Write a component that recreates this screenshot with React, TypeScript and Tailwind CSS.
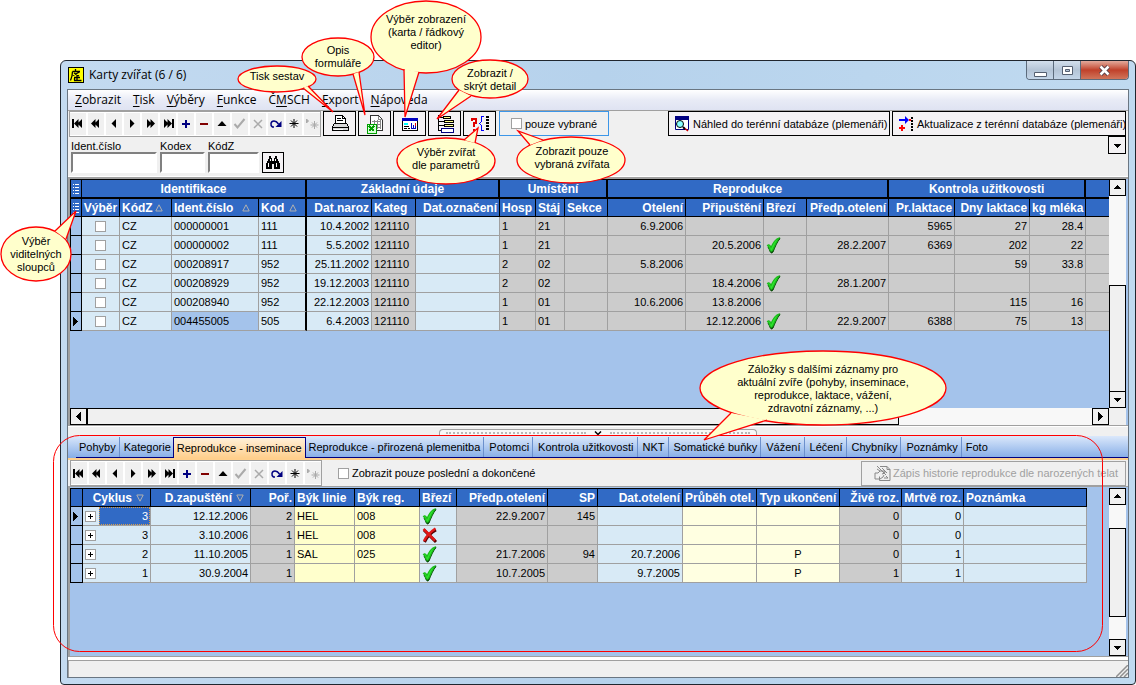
import { useState } from "react";
import type { ReactNode } from "react";

type Align = "left" | "center" | "right";

type Column = {
  title: string;
  width: string;
  align: Align;
  tone: string;
  sort?: "up" | "down";
  thick?: boolean;
};

const ALIGN: Record<Align, string> = {
  left: "text-left",
  center: "text-center",
  right: "text-right",
};

const BLUE = "bg-[#d8eaf6]";
const GRAY = "bg-[#cccccc]";
const YELLOW = "bg-[#ffffcc]";
const CREAM = "bg-[#ffffe1]";

const animalColumns: Column[] = [
  { title: "Výběr", width: "w-[38px]", align: "center", tone: BLUE },
  { title: "KódZ", width: "w-[52px]", align: "left", tone: BLUE, sort: "up" },
  { title: "Ident.číslo", width: "w-[87px]", align: "left", tone: BLUE, sort: "up" },
  { title: "Kod", width: "w-[48px]", align: "left", tone: BLUE, sort: "up", thick: true },
  { title: "Dat.naroz", width: "w-[65px]", align: "right", tone: BLUE },
  { title: "Kateg", width: "w-[44px]", align: "left", tone: GRAY },
  { title: "Dat.označení", width: "w-[84px]", align: "right", tone: BLUE },
  { title: "Hosp", width: "w-[36px]", align: "left", tone: GRAY },
  { title: "Stáj", width: "w-[29px]", align: "left", tone: GRAY },
  { title: "Sekce", width: "w-[43px]", align: "left", tone: GRAY },
  { title: "Otelení", width: "w-[78px]", align: "right", tone: GRAY },
  { title: "Připuštění", width: "w-[78px]", align: "right", tone: GRAY },
  { title: "Březí", width: "w-[43px]", align: "left", tone: GRAY },
  { title: "Předp.otelení", width: "w-[82px]", align: "right", tone: GRAY },
  { title: "Pr.laktace", width: "w-[66px]", align: "right", tone: GRAY },
  { title: "Dny laktace", width: "w-[75px]", align: "right", tone: GRAY },
  { title: "kg mléka", width: "w-[56px]", align: "right", tone: GRAY },
];

const bands = [
  { title: "Identifikace", span: 4 },
  { title: "Základní údaje", span: 3 },
  { title: "Umístění", span: 3 },
  { title: "Reprodukce", span: 4 },
  { title: "Kontrola užitkovosti", span: 3 },
];

const animals = [
  ["", "CZ", "000000001", "111", "10.4.2002", "121110", "", "1", "21", "", "6.9.2006", "", "", "", "5965", "27", "28.4"],
  ["", "CZ", "000000002", "111", "5.5.2002", "121110", "", "1", "21", "", "", "20.5.2006", "yes", "28.2.2007", "6369", "202", "22"],
  ["", "CZ", "000208917", "952", "25.11.2002", "121110", "", "2", "02", "", "5.8.2006", "", "", "", "", "59", "33.8"],
  ["", "CZ", "000208929", "952", "19.12.2003", "121110", "", "2", "02", "", "", "18.4.2006", "yes", "28.1.2007", "", "", ""],
  ["", "CZ", "000208940", "952", "22.12.2003", "121110", "", "1", "01", "", "10.6.2006", "13.8.2006", "", "", "", "115", "16"],
  ["", "CZ", "004455005", "505", "6.4.2003", "121110", "", "1", "01", "", "", "12.12.2006", "yes", "22.9.2007", "6388", "75", "13"],
];

const cycleColumns: Column[] = [
  { title: "Cyklus", width: "w-[68px]", align: "right", tone: BLUE, sort: "down" },
  { title: "D.zapuštění", width: "w-[100px]", align: "right", tone: BLUE, sort: "down" },
  { title: "Poř.", width: "w-[44px]", align: "right", tone: GRAY },
  { title: "Býk linie", width: "w-[60px]", align: "left", tone: YELLOW },
  { title: "Býk reg.", width: "w-[65px]", align: "left", tone: YELLOW },
  { title: "Březí", width: "w-[37px]", align: "left", tone: BLUE },
  { title: "Předp.otelení", width: "w-[91px]", align: "right", tone: GRAY },
  { title: "SP", width: "w-[50px]", align: "right", tone: GRAY },
  { title: "Dat.otelení", width: "w-[85px]", align: "right", tone: BLUE },
  { title: "Průběh otel.", width: "w-[74px]", align: "left", tone: CREAM },
  { title: "Typ ukončení", width: "w-[83px]", align: "center", tone: CREAM },
  { title: "Živě roz.", width: "w-[62px]", align: "right", tone: GRAY },
  { title: "Mrtvě roz.", width: "w-[62px]", align: "right", tone: BLUE },
  { title: "Poznámka", width: "w-[123px]", align: "left", tone: BLUE },
];

const cycles = [
  ["3", "12.12.2006", "2", "HEL", "008", "yes", "22.9.2007", "145", "", "", "", "0", "0", ""],
  ["3", "3.10.2006", "1", "HEL", "008", "no", "", "", "", "", "", "0", "0", ""],
  ["2", "11.10.2005", "1", "SAL", "025", "yes", "21.7.2006", "94", "20.7.2006", "", "P", "0", "1", ""],
  ["1", "30.9.2004", "1", "", "", "yes", "10.7.2005", "", "9.7.2005", "", "P", "1", "1", ""],
];

const tabs = [
  "Pohyby",
  "Kategorie",
  "Reprodukce - inseminace",
  "Reprodukce - přirozená plemenitba",
  "Potomci",
  "Kontrola užitkovosti",
  "NKT",
  "Somatické buňky",
  "Vážení",
  "Léčení",
  "Chybníky",
  "Poznámky",
  "Foto",
];

const menu = [
  ["", "Z", "obrazit"],
  ["", "T", "isk"],
  ["", "V", "ýběry"],
  ["", "F", "unkce"],
  ["Č", "M", "SCH"],
  ["", "E", "xport"],
  ["", "N", "ápověda"],
];

const asterisk = "M8 4v9M3.500 8.500h9M5 5.500l6 6M11 5.500l-6 6";

const navItems: { label: string; icon: ReactNode }[] = [
  { label: "První", icon: <path d="M2 4h2v9H2zM4 8.500L8.500 4v3.500L12 4v9L8.500 9.500V13z" fill="#000" /> },
  { label: "O stránku zpět", icon: <path d="M3 8.500L7.500 4v3.500L11 4v9L7.500 9.500V13z" fill="#000" /> },
  { label: "Předchozí", icon: <path d="M5.500 8.500L10 4v9z" fill="#000" /> },
  { label: "Další", icon: <path d="M10.500 8.500L6 4v9z" fill="#000" /> },
  { label: "O stránku vpřed", icon: <path d="M13 8.500L8.500 4v3.500L5 4v9l3.500-3.500V13z" fill="#000" /> },
  { label: "Poslední", icon: <path d="M14 4h-2v9h2zM12 8.500L7.500 4v3.500L4 4v9l3.500-3.500V13z" fill="#000" /> },
  { label: "Přidat", icon: <path d="M4 9h8M8 5v8" stroke="#000080" strokeWidth="2" /> },
  { label: "Smazat", icon: <path d="M4 9h8" stroke="#800000" strokeWidth="2" /> },
  { label: "Upravit", icon: <path d="M3.500 11L8 6l4.500 5z" fill="#000" /> },
  { label: "Uložit", icon: <path d="M2.500 9l3 3.500L12.500 4" stroke="#aaa" strokeWidth="2" fill="none" /> },
  { label: "Zrušit", icon: <path d="M4 5l8 8M12 5l-8 8" stroke="#aaa" strokeWidth="1.5" /> },
  {
    label: "Obnovit",
    icon: (
      <>
        <path d="M6 12H4.500C2 10.500 2.500 6 6 6c2.500 0 3.500 1.500 4.500 3" stroke="#000080" strokeWidth="1.500" fill="none" />
        <path d="M13.500 6v6H7.500z" fill="#000080" />
      </>
    ),
  },
  { label: "Záložka", icon: <path d={asterisk} stroke="#000" /> },
  { label: "Na záložku", icon: <path d="M10.500 6v8M6.500 10h8M8 7.500l5 5M13 7.500l-5 5M2.500 4v4l2-2z" stroke="#aaa" fill="#aaa" /> },
];

const Arrow = ({ dir }: { dir: "up" | "down" | "left" | "right" }) => {
  const d = {
    up: "M0 6L4.500 2 9 6z",
    down: "M0 3h9L4.500 7z",
    left: "M2 4.500L7 0v9z",
    right: "M7 4.500L2 0v9z",
  }[dir];
  return (
    <svg width="9" height="9" viewBox="0 0 9 9" shapeRendering="crispEdges">
      <path d={d} />
    </svg>
  );
};

const Navigator = () => (
  <div className="flex shrink-0 gap-0.5 border border-[#a0a0a0] bg-white py-px">
    {navItems.map((item) => (
      <button key={item.label} type="button" aria-label={item.label} className="flex h-[22px] w-4 items-center justify-center bg-[#f0f0f0]">
        <svg width="16" height="17" viewBox="0 0 16 17">
          {item.icon}
        </svg>
      </button>
    ))}
  </div>
);

const ToolButton = ({ label, children }: { label: string; children: ReactNode }) => (
  <button type="button" aria-label={label} className="flex h-[25px] w-[33px] items-center justify-center border border-black bg-[#f4f2f4]">
    <svg width="20" height="20" viewBox="0 0 20 20" shapeRendering="crispEdges">
      {children}
    </svg>
  </button>
);

const YesMark = () => (
  <svg width="16" height="17" viewBox="0 0 16 17">
    <path d="M2 10C3 8.500 4.500 9 5.500 11 7.500 7 10 2.500 14 1.500 11 5 9 10 7 15c-1 1.500-2 1-2.700 0C3.500 13 3 11.500 2 10z" fill="#064d06" stroke="#064d06" />
    <path d="M1.500 8.500C2.500 7 4 8 5 10.500 7 6 9.500 2 13 1 10.500 5 8.500 9 6.500 13.500c-.7 1-1.700 1-2.200 0C3.500 11.500 3 9.500 1.500 8.500z" fill="#2ee62e" stroke="#1cbc1c" strokeWidth="1.200" />
  </svg>
);

const NoMark = () => (
  <svg width="16" height="17" viewBox="0 0 16 17">
    <path d="M2 3l12 12M14 3C10 5 5 10 2.500 15" stroke="#5a0000" strokeWidth="3" fill="none" />
    <path d="M1.500 2l11.500 11.500M13.500 1.500C9 4.500 4.500 9 2 14" stroke="#e01818" strokeWidth="2.500" fill="none" />
  </svg>
);

const SortMark = ({ dir }: { dir: "up" | "down" }) => (
  <svg width="8" height="8" viewBox="0 0 8 8" className={dir === "up" ? "mr-1.5 shrink-0" : "mr-1 shrink-0"}>
    <path d={dir === "up" ? "M4 .8L.8 7h6.400z" : "M4 7.200L.8 1h6.400z"} fill="none" stroke="#b0b0b0" />
  </svg>
);

const ListMark = () => (
  <svg width="10" height="11" viewBox="0 0 10 11" shapeRendering="crispEdges" className="mx-auto">
    <path d="M2 1.500h1M4 1.500h4M2 4.500h1M4 4.500h4M2 7.500h1M4 7.500h4M2 10.500h1M4 10.500h4" stroke="#fff" />
  </svg>
);

const HeadCell = ({ col }: { col: Column }) => (
  <th
    className={`h-[18px] overflow-hidden border-b border-black bg-[#316ac5] py-0 text-xs font-bold whitespace-nowrap text-white ${col.align === "center" ? "px-0" : "px-0.5"} ${ALIGN[col.align]} ${col.thick ? "border-r-2" : "border-r"}`}
  >
    {col.sort ? (
      <span className={`flex items-center ${col.align === "right" ? "justify-end gap-1" : "justify-between"}`}>
        {col.title}
        <SortMark dir={col.sort} />
      </span>
    ) : (
      col.title
    )}
  </th>
);

const cellContent = (value: string) => {
  if (value === "yes") return <YesMark />;
  if (value === "no") return <NoMark />;
  return value;
};

const ScrollButton = ({ dir }: { dir: "up" | "down" | "left" | "right" }) => (
  <button type="button" aria-label={dir} className="flex h-[17px] w-[17px] shrink-0 items-center justify-center border border-black bg-[#f0f0f0]">
    <Arrow dir={dir} />
  </button>
);

const AnimalGrid = () => {
  const [checked, setChecked] = useState<boolean[]>(animals.map(() => false));

  const toggle = (index: number) => {
    setChecked((prev) => prev.map((v, i) => (i === index ? !v : v)));
  };

  return (
    <table className="w-full table-fixed border-separate border-spacing-0">
      <colgroup>
        <col className="w-[12px]" />
        {animalColumns.map((c) => (
          <col key={c.title} className={c.width} />
        ))}
        <col />
      </colgroup>
      <thead>
        <tr className="bg-[#316ac5] text-xs text-white">
          <th className="h-5 border-x border-t border-b-2 border-black p-0">
            <ListMark />
          </th>
          {bands.map((b) => (
            <th key={b.title} colSpan={b.span} className="h-5 border-t border-r-2 border-b-2 border-black p-0 text-center">
              {b.title}
            </th>
          ))}
          <th className="border-t border-b-2 border-black p-0" />
        </tr>
        <tr className="bg-[#316ac5]">
          <th className="border-x border-b border-black p-0">
            <ListMark />
          </th>
          {animalColumns.map((c) => (
            <HeadCell key={c.title} col={c} />
          ))}
          <th className="border-b border-black p-0" />
        </tr>
      </thead>
      <tbody>
        {animals.map((row, r) => (
          <tr key={row[2]}>
            <td className="h-[19px] border-x border-b border-black bg-[#a4c3eb] p-0">{r === 5 && <Arrow dir="right" />}</td>
            {animalColumns.map((c, i) => (
              <td
                key={c.title}
                className={`h-[19px] border-b border-b-[#a0a0a0] px-0.5 py-0 ${ALIGN[c.align]} ${c.thick ? "border-r-2 border-r-black" : "border-r border-r-[#a0a0a0]"} ${r === 5 && i === 2 ? "bg-[#a4c3eb]" : c.tone}`}
              >
                {i === 0 ? (
                  <input
                    type="checkbox"
                    aria-label={`Výběr ${row[2]}`}
                    checked={checked[r]}
                    onChange={() => toggle(r)}
                    className="mx-auto block h-[11px] w-[11px] appearance-none border border-[#a0a0a0] bg-white checked:bg-[#316ac5]"
                  />
                ) : (
                  cellContent(row[i])
                )}
              </td>
            ))}
            <td className="border-b border-b-[#a0a0a0] bg-[#cccccc] p-0" />
          </tr>
        ))}
      </tbody>
    </table>
  );
};

const CycleGrid = () => (
  <table className="w-[1017px] table-fixed border-separate border-spacing-0">
    <colgroup>
      <col className="w-[13px]" />
      {cycleColumns.map((c) => (
        <col key={c.title} className={c.width} />
      ))}
    </colgroup>
    <thead>
      <tr className="[&>th]:h-[19px] [&>th]:border-t">
        <th className="border-x border-b border-black bg-[#316ac5] p-0" />
        {cycleColumns.map((c) => (
          <HeadCell key={c.title} col={c} />
        ))}
      </tr>
    </thead>
    <tbody>
      {cycles.map((row, r) => (
        <tr key={row[1]}>
          <td className="h-[19px] border-x border-b border-black bg-[#a4c3eb] p-0">{r === 0 && <Arrow dir="right" />}</td>
          {cycleColumns.map((c, i) => (
            <td key={c.title} className={`h-[19px] border-r border-b border-[#a0a0a0] py-0 ${i === 0 ? "pl-0.5" : "px-0.5"} ${ALIGN[c.align]} ${c.tone}`}>
              {i === 0 ? (
                <div className="flex items-center gap-[3px]">
                  <button type="button" aria-label="Rozbalit" className="flex h-[11px] w-[11px] items-center justify-center border border-[#a0a0a0] bg-white">
                    <svg width="5" height="5" viewBox="0 0 5 5" shapeRendering="crispEdges">
                      <path d="M0 2h5v1H0zM2 0h1v5H2z" />
                    </svg>
                  </button>
                  <span
                    className={`h-[18px] flex-1 pr-px leading-4 ${r === 0 ? "border border-dotted border-[#d8a050] bg-[#316ac5] text-white" : "border border-transparent"}`}
                  >
                    {row[0]}
                  </span>
                </div>
              ) : (
                cellContent(row[i])
              )}
            </td>
          ))}
        </tr>
      ))}
    </tbody>
  </table>
);

const bubbles = [
  { cx: 277, cy: 79, rx: 39, ry: 13, tail: "303,88 333,112 308,86" },
  { cx: 338, cy: 57, rx: 36, ry: 19, tail: "353,74 365,115 359,72" },
  { cx: 426, cy: 37, rx: 55, ry: 36, tail: "404,69 405,117 419,72" },
  { cx: 490, cy: 79, rx: 38, ry: 19, tail: "459,90 437,119 471,96" },
  { cx: 446, cy: 161, rx: 49, ry: 23, tail: "464,140 478,128 475,143" },
  { cx: 571, cy: 160, rx: 54, ry: 23, tail: "530,145 518,131 543,140" },
  { cx: 36, cy: 254, rx: 35, ry: 27, tail: "55,231 76,211 66,239" },
  { cx: 823, cy: 388, rx: 123, ry: 37, tail: "731,413 704,440 767,420" },
];

const notes = [
  { place: "left-[237px] top-[70px] w-[80px]", lines: ["Tisk sestav"] },
  { place: "left-[298px] top-[44px] w-[80px]", lines: ["Opis", "formuláře"] },
  { place: "left-[366px] top-[13px] w-[120px]", lines: ["Výběr zobrazení", "(karta / řádkový", "editor)"] },
  { place: "left-[450px] top-[67px] w-[80px]", lines: ["Zobrazit /", "skrýt detail"] },
  { place: "left-[396px] top-[146px] w-[100px]", lines: ["Výběr zvířat", "dle parametrů"] },
  { place: "left-[522px] top-[145px] w-[100px]", lines: ["Zobrazit pouze", "vybraná zvířata"] },
  { place: "left-[1px] top-[235px] w-[70px]", lines: ["Výběr", "viditelných", "sloupců"] },
  {
    place: "left-[723px] top-[363px] w-[200px]",
    lines: ["Záložky s dalšími záznamy pro", "aktuální zvíře (pohyby, inseminace,", "reprodukce, laktace, vážení,", "zdravotní záznamy, ...)"],
  },
];

// Help balloons drawn over the window
const Callouts = () => (
  <div className="pointer-events-none absolute inset-0 overflow-hidden">
    <svg width="1136" height="685" viewBox="0 0 1136 685" className="absolute top-0 left-0">
      <rect x="53.500" y="435.500" width="1049" height="216" rx="26" fill="none" stroke="#f00" />
      {bubbles.map((b) => (
        <g key={b.tail} fill="#ffffcc" stroke="#f00" strokeWidth="1.300">
          <ellipse cx={b.cx} cy={b.cy} rx={b.rx} ry={b.ry} />
          <polyline points={b.tail} />
        </g>
      ))}
    </svg>
    {notes.map((n) => (
      <p key={n.lines[0]} className={`absolute text-center leading-[13px] whitespace-nowrap ${n.place}`}>
        {n.lines.map((line) => (
          <span key={line} className="block">
            {line}
          </span>
        ))}
      </p>
    ))}
  </div>
);

const TitleBar = () => (
  <div className="flex h-7 items-start justify-between">
    <div className="flex h-7 items-center gap-[5px] pl-px font-['Open_Sans',sans-serif] text-xs">
      <svg width="16" height="16" viewBox="0 0 16 16">
        <path d="M0 0h16v16H0z" />
        <path d="M1 1h14v14H1z" fill="#ff0" />
        <path d="M7.500 2v2M4.500 4.500H12M4.500 4.500C4.500 8 4 10 2.500 13.500M5 8.500L11.500 5M6 6l5 3M6 10.500h6M9 8v5M6 13.500h7.500M6.500 11v2.500" stroke="#000" strokeWidth="1.300" fill="none" />
      </svg>
      Karty zvířat (6 / 6)
    </div>
    <div className="flex h-[19px] overflow-hidden rounded-b-[4px] border border-t-0 border-[#5c6b7c]">
      <button type="button" aria-label="Minimalizovat" className="flex w-[27px] items-end justify-center border-r border-[#5c6b7c] bg-linear-to-b from-[#d3dfec] via-[#b4c4d6] to-[#c3d5e8] pb-px">
        <svg width="13" height="11" viewBox="0 0 13 11">
          <path d="M.5 5.500h12v4H.5z" fill="#fff" stroke="#555f70" />
        </svg>
      </button>
      <button type="button" aria-label="Maximalizovat" className="flex w-[27px] items-center justify-center border-r border-[#5c6b7c] bg-linear-to-b from-[#d3dfec] via-[#b4c4d6] to-[#c3d5e8]">
        <svg width="13" height="11" viewBox="0 0 13 11">
          <path d="M1.500 1.500h10v8h-10zM4.500 4.500h4v2h-4z" fill="#fff" stroke="#555f70" fillRule="evenodd" />
        </svg>
      </button>
      <button type="button" aria-label="Zavřít" className="flex w-[47px] items-center justify-center bg-linear-to-b from-[#e2aa9c] via-[#c0402a] to-[#d0745a]">
        <svg width="13" height="11" viewBox="0 0 13 11">
          <path d="M2.500 1.500l8 8M10.500 1.500l-8 8" stroke="#5a4048" strokeWidth="4.500" />
          <path d="M2.500 1.500l8 8M10.500 1.500l-8 8" stroke="#fff" strokeWidth="2.500" />
        </svg>
      </button>
    </div>
  </div>
);

const TopPanel = () => (
  <div className="border-b border-white bg-[#f0f0f0] pb-[3px]">
    <div className="flex h-[25px] items-center gap-0.5 pr-0.5 pl-px">
      <Navigator />
      <ToolButton label="Tisk sestav">
        <path d="M5.500 9.500V1.500h7l3 3v5" fill="#fff" stroke="#000" />
        <path d="M7 4.500h4M7 6.500h6M12.500 1.500v3h3" stroke="#000" fill="none" />
        <path d="M4.500 9.500h12l2 3v4h-16v-4z" fill="#d8d8d8" stroke="#000" />
        <path d="M3 13.500h15" stroke="#000" />
        <path d="M4 15.500h9" stroke="#fff" />
      </ToolButton>
      <ToolButton label="Opis formuláře">
        <path d="M5.500 1.500h8l4 4v11h-12z" fill="#fff" stroke="#333" />
        <path d="M13.500 1.500v4h4M7 7.500h9M7 10.500h9M7 13.500h9M9.500 6v9M12.500 6v9M15.500 6v9" stroke="#888" fill="none" />
        <path d="M2 10h9v9H2z" fill="#d8ffd8" stroke="#00a000" />
        <path d="M4 12l5 5M9 12l-5 5" stroke="#00a000" strokeWidth="2" />
      </ToolButton>
      <ToolButton label="Výběr zobrazení">
        <path d="M2.500 4.500h15v12h-15z" fill="#fff" stroke="#000" />
        <path d="M2 4h16v3H2z" fill="#0000c0" />
        <path d="M4 9h4v2H4z" fill="#0ff" />
        <path d="M4 12h5v1H4zM4 14h3v1H4zM8 14h2v1H8z" />
        <path d="M11.500 9v5.500h4V9M13.500 11v3" stroke="#0000c0" fill="none" />
        <path d="M15 9h1v3h-1z" fill="#e00" />
      </ToolButton>
      <ToolButton label="Skrýt detail">
        <path d="M3.500 1v16M3 3.500h6M3 7.500h6M3 11.500h6M3 16.500h4" stroke="#000" fill="none" />
        <path d="M8.500 2.500h7v2h-7zM9.500 6.500h9v2h-9zM9.500 10.500h9v2h-9z" fill="#ff8" stroke="#000" />
        <path d="M6.500 14.500h12v4h-12z" fill="#fff" stroke="#000080" />
      </ToolButton>
      <ToolButton label="Výběr zvířat dle parametrů">
        <path d="M2 7V5h4v4H4v4M4 14.500v2" stroke="#e00000" strokeWidth="2" fill="none" />
        <path d="M14 2.500h-2.500v5l-2 2 2 2v5H14" stroke="#0000ff" fill="none" />
        <path d="M17 2v15" stroke="#000" strokeWidth="3" strokeDasharray="2 1" />
      </ToolButton>
      <label className="ml-px flex h-[25px] w-[110px] items-center gap-[3px] border border-[#3c96e8] pl-[11px]">
        <input type="checkbox" className="h-[11px] w-[11px] appearance-none border border-[#a0a0a0] bg-white checked:bg-[#316ac5]" />
        pouze vybrané
      </label>
      <div className="ml-auto flex gap-0.5 whitespace-nowrap">
        <button type="button" className="flex h-[25px] w-[222px] items-center gap-[3px] border border-black bg-[#f4f2f4] pl-[5px]">
          <svg width="16" height="16" viewBox="0 0 16 16" className="shrink-0">
            <path d="M1.500 1.500h13v12h-13z" fill="#fff" stroke="#000080" />
            <path d="M1 0h14v4H1z" fill="#000080" />
            <circle cx="6" cy="8" r="3.500" fill="#8ff" stroke="#000" />
            <path d="M9 11l2 2" stroke="#000" strokeWidth="2" />
            <path d="M11 12.500l3 2.500" stroke="#c00" strokeWidth="1.500" />
          </svg>
          Náhled do terénní databáze (plemenáři)
        </button>
        <button type="button" className="flex h-[25px] w-[234px] items-center gap-[3px] border border-black bg-[#f4f2f4] pl-[5px]">
          <svg width="16" height="16" viewBox="0 0 16 16" className="shrink-0">
            <path d="M1 4h7" stroke="#0000ff" strokeWidth="2" />
            <path d="M7 0l4 4-4 4z" fill="#0000ff" />
            <path d="M1 12h6M4 9v6" stroke="#f00" strokeWidth="2" />
            <path d="M11 3h2v2h-2z" fill="#f00" />
            <path d="M14 1v14" stroke="#000" strokeWidth="2" strokeDasharray="2 1" />
          </svg>
          Aktualizace z terénní databáze (plemenáři)
        </button>
      </div>
    </div>
    <div className="flex items-start justify-between pr-0.5 pl-px">
      <div className="flex items-end gap-[3px] pt-1 pl-0.5">
        <label className="flex flex-col leading-3">
          Ident.číslo
          <input className="h-[21px] w-[86px] border-2 border-t-[#808080] border-r-white border-b-white border-l-[#808080] bg-white px-0.5" />
        </label>
        <label className="flex flex-col leading-3">
          Kodex
          <input className="h-[21px] w-[45px] border-2 border-t-[#808080] border-r-white border-b-white border-l-[#808080] bg-white px-0.5" />
        </label>
        <label className="flex flex-col leading-3">
          KódZ
          <input className="h-[21px] w-[51px] border-2 border-t-[#808080] border-r-white border-b-white border-l-[#808080] bg-white px-0.5" />
        </label>
        <button type="button" aria-label="Hledat" className="flex h-[21px] w-[22px] items-center justify-center border border-black bg-[#f4f2f4]">
          <svg width="16" height="15" viewBox="0 0 16 15" shapeRendering="crispEdges">
            <path d="M4 1h2v2h1v3h2V3h1V1h2v2l3 6v5H9V9H7v5H1V9l3-6z" />
            <path d="M3 8h1v4H3zM11 8h1v4h-1zM5 4h1v2H5zM10 4h1v2h-1z" fill="#fff" />
          </svg>
        </button>
      </div>
      <button type="button" aria-label="Další" className="flex h-[18px] w-[18px] items-center justify-center border border-black bg-[#f4f2f4]">
        <Arrow dir="down" />
      </button>
    </div>
  </div>
);

const App = () => {
  const [activeTab, setActiveTab] = useState(2);

  return (
    <div className="relative flex min-h-screen flex-col bg-white pt-[60px] pl-[60px] font-['Liberation_Sans',Arial,sans-serif] text-[11px] leading-[14px] text-black">
      <div className="flex flex-1 flex-col rounded-t-[6px] rounded-b-[4px] border border-[#20262e] bg-linear-to-r from-[#c3daf0] via-[#b6d2ec] to-[#c0daf0] px-1.5 pb-1.5">
        <TitleBar />
        <div className="flex flex-1 flex-col border border-[#6a7682] bg-[#f0f0f0]">
          {/* Menu */}
          <nav className="flex h-[21px] items-center border-b border-[#a0a0a0] bg-linear-to-b from-white via-[#e8ebf6] to-[#dfe3f2] pl-px font-['Open_Sans',sans-serif] text-xs">
            {menu.map(([before, key, after]) => (
              <button key={after} type="button" className="px-1.5">
                {before}
                <span className="underline underline-offset-2">{key}</span>
                {after}
              </button>
            ))}
          </nav>
          <TopPanel />

          {/* Animals */}
          <div className="flex flex-1 flex-col border-t-2 border-b border-l-2 border-[#a0a0a0] bg-[#a4c3eb] pr-0.5">
            <div className="flex flex-1">
              <div className="min-w-0 flex-1">
                <AnimalGrid />
              </div>
              <div className="flex w-[17px] flex-col bg-[#f8f8f8]">
                <ScrollButton dir="up" />
                <div className="flex-[89]" />
                <div className="flex-[106] border border-b-0 border-black bg-[#f0f0f0]" />
                <ScrollButton dir="down" />
              </div>
            </div>
            <div className="flex bg-[#f8f8f8]">
              <ScrollButton dir="left" />
              <div className="flex-[812] border border-black bg-[#f0f0f0]" />
              <div className="flex-[193]" />
              <ScrollButton dir="right" />
              <div className="w-[17px] bg-[#f0f0f0]" />
            </div>
          </div>

          {/* Splitter */}
          <div className="flex h-2.5 justify-center border-t border-white pt-0.5">
            <button type="button" aria-label="Splitter" className="flex h-[7px] w-[318px] items-center justify-between rounded-t-[4px] border border-b-0 border-[#a0a0a0] bg-[#f8f8f8] px-1.5">
              <span className="w-[140px] border-t-2 border-dotted border-[#b8b8b8]" />
              <svg width="8" height="5" viewBox="0 0 8 5">
                <path d="M1 .5l3 3 3-3" stroke="#000" strokeWidth="1.500" fill="none" />
              </svg>
              <span className="w-[140px] border-t-2 border-dotted border-[#b8b8b8]" />
            </button>
          </div>

          {/* Detail tabs */}
          <div role="tablist" className="flex h-6 items-end border-b-2 border-[#ffcf8c] bg-linear-to-b from-[#dbe8fb] to-[#86ade6] pl-2">
            {tabs.map((tab, i) => (
              <button
                key={tab}
                type="button"
                role="tab"
                aria-selected={i === activeTab}
                onClick={() => setActiveTab(i)}
                className={
                  i === activeTab
                    ? "h-[21px] border border-b-0 border-[#000080] bg-linear-to-b from-[#fff0d8] to-[#ffcf8c] px-[3px] whitespace-nowrap"
                    : "h-[21px] border-b border-[#000080] px-0.5 whitespace-nowrap"
                }
              >
                <span className={i === activeTab || i === activeTab - 1 || i === tabs.length - 1 ? "block leading-5" : "block border-r border-[#6c90cc] pr-[3px] pl-px leading-5"}>{tab}</span>
              </button>
            ))}
            <div className="h-px flex-1 bg-[#000080]" />
          </div>

          <div className="flex h-[27px] items-center border-b border-[#a0a0a0] px-0.5">
            <Navigator />
            <label className="ml-4 flex items-center gap-[3px]">
              <input type="checkbox" className="h-[11px] w-[11px] appearance-none border border-[#a0a0a0] bg-white checked:bg-[#316ac5]" />
              Zobrazit pouze poslední a dokončené
            </label>
            <button type="button" disabled className="ml-auto flex h-[25px] w-[265px] items-center gap-0.5 border border-[#a0a0a0] pl-3 whitespace-nowrap text-[#a0a0a0]">
              <svg width="17" height="17" viewBox="0 0 17 17" fill="none" stroke="#888" className="shrink-0">
                <path d="M6 1.500h7l3 3v11H5.500v-4M13 1.500v3h3M1 8h3l2-2h4l1 2-3 1M1 8v6h5l3-2 1-2M3 1l9 9M8 3l5 5M12 11l2 2M10 13h4M3 4l3 2" />
              </svg>
              Zápis historie reprodukce dle narozených telat
            </button>
          </div>

          {/* Insemination cycles */}
          <div className="flex h-[170px] border-b border-l-2 border-[#a0a0a0] bg-[#a4c3eb] pt-px pr-0.5">
            <div className="min-w-0 flex-1">
              <CycleGrid />
            </div>
            <div className="flex w-[17px] flex-col bg-[#f8f8f8]">
              <ScrollButton dir="up" />
              <div className="flex-[23]" />
              <div className="flex-[89] border border-black bg-[#f0f0f0]" />
              <div className="flex-[22]" />
              <ScrollButton dir="down" />
            </div>
          </div>

          {/* Status bar */}
          <div className="h-5 border-t-3 border-white">
            <div className="flex h-[17px] items-end justify-end border-t border-l border-[#a0a0a0]">
              <svg width="12" height="12" viewBox="0 0 12 12">
                <path d="M0 12L12 0M4 12l8-8M8 12l4-4" stroke="#909090" strokeWidth="1.500" />
              </svg>
            </div>
          </div>
        </div>
      </div>
      <Callouts />
    </div>
  );
};

export default App;
